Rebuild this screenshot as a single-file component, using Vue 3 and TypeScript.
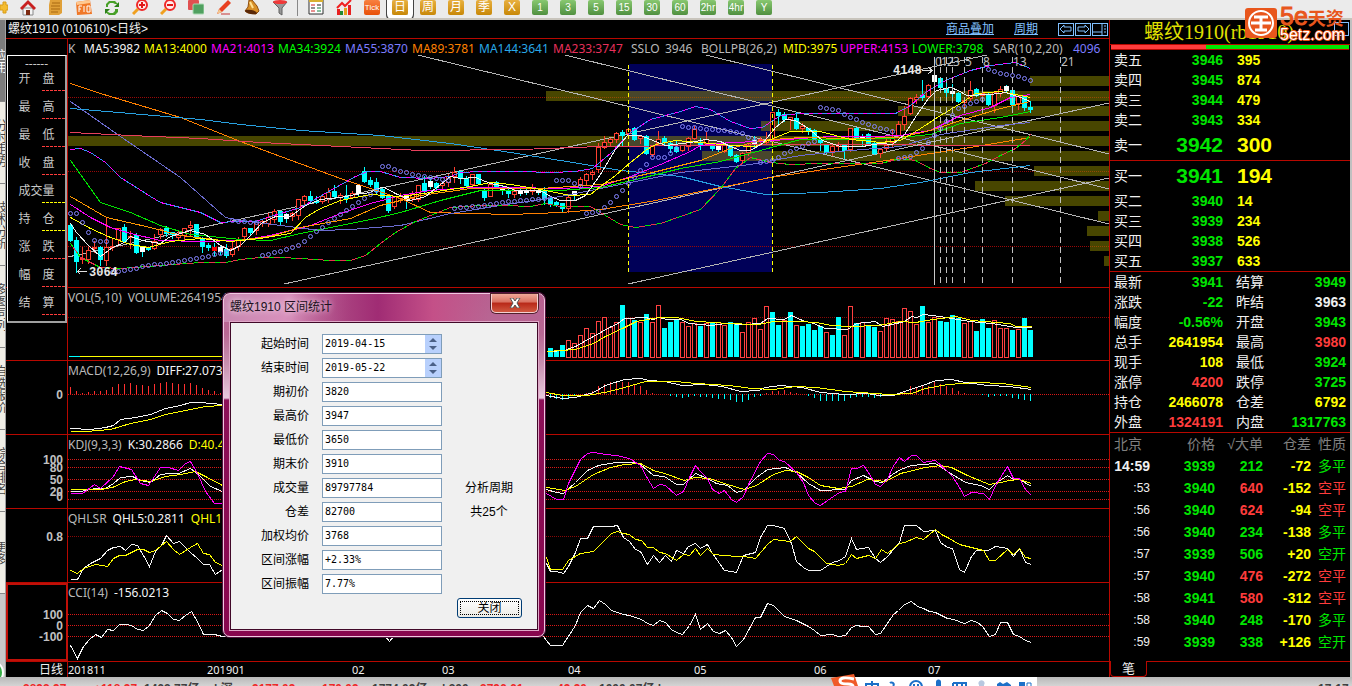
<script setup lang="ts">
interface Candle { x: number; kind: string; high: number; top: number; bottom: number; low: number }
interface Line { color: string; points: string; dash?: string }
interface Panel { name: string; x: number; y: number; h: number; grid: number[]; lines: Line[]; ticks: { y: number; text: string }[]; legend: { text: string; color: string }[] }

const STEP = 6
const FIRST_X = 70

const rawCandles = `c222 225 240 241,c236 240 261 272,r246 258 259 263,r246 250 259 263,r240 247 248 252,c245 247 259 265,r217 247 260 265,r238 246 247 250,r228 228 239 245,c223 227 241 242,r230 236 237 248,c232 235 252 253,w246 247 251 256,c246 247 249 250,r233 241 248 249,r227 229 234 238,c225 228 233 236,c231 232 234 238,r230 235 237 239,r228 228 235 239,r220 225 227 236,c223 224 236 237,c236 238 246 252,c242 245 247 250,e242 247 250 255,w245 247 251 254,c243 249 255 257,r240 248 254 256,r236 240 246 250,r226 228 236 240,c227 228 232 234,r220 222 230 234,r218 221 223 226,r212 217 223 226,r208 211 219 222,c210 211 221 225,w212 214 218 222,r211 213 216 220,r198 199 215 219,r194 196 200 204,c190 196 200 202,c195 201 202 203,r194 196 201 203,r187 192 198 202,c184 191 196 198,r192 195 197 203,c184 196 198 202,r190 193 197 198,w183 185 193 195,c166 171 181 182,c176 180 184 186,c177 182 191 194,c186 189 197 198,c193 195 210 212,r195 196 206 208,r192 196 198 202,w194 196 200 208,r190 194 198 201,r184 185 199 201,c175 183 191 193,w178 181 186 188,c181 183 187 189,r180 183 185 190,r173 176 182 186,r166 172 176 182,c170 171 178 183,c175 178 185 186,r173 174 184 186,c173 174 183 184,c188 190 197 200,r182 184 196 196,c180 182 187 188,w184 188 190 194,c186 190 193 197,r188 191 194 197,w188 191 193 195,w187 190 192 194,r183 188 191 194,w187 190 192 194,c186 190 198 204,c195 198 203 206,c200 202 204 206,c202 203 208 211,r195 197 208 212,w190 191 194 200,r176 179 184 188,r172 174 180 184,r169 172 174 179,r142 147 169 172,r135 142 147 148,r137 139 142 146,r131 133 139 142,c129 132 135 145,r128 129 133 136,c126 128 139 140,r134 136 138 143,c134 136 153 154,r144 146 154 156,r130 139 143 145,c135 138 142 145,c141 143 148 152,c140 147 151 152,r145 145 150 151,r136 138 146 150,r125 129 138 139,c137 142 144 149,r131 139 143 145,c142 144 148 150,w143 145 149 151,r143 145 151 152,c144 146 155 156,c153 155 161 162,r151 153 160 163,r143 145 152 155,w135 140 143 147,r136 139 141 145,r131 140 142 144,r111 112 140 142,c108 112 115 125,c111 114 119 121,r116 117 119 129,c111 118 128 129,r122 126 128 132,c127 128 130 134,c128 130 138 139,c138 140 142 150,c144 145 152 153,r144 146 151 155,r141 144 146 150,c143 145 150 158,r127 128 149 151,c126 128 137 138,w133 136 140 145,c132 134 144 145,c140 143 153 154,r148 149 153 157,r138 145 148 150,r128 137 142 147,r120 124 135 136,r105 116 124 129,r96 98 113 114,r93 97 99 103,c79 95 97 100,r83 85 96 98,w68 75 81 88,c76 78 87 90,c80 88 92 96,w83 91 93 97,c91 93 101 102,r96 100 102 106,r80 90 98 100,c87 89 95 96,r89 93 95 98,c91 94 104 105,r91 92 105 112,r85 89 93 96,w84 86 90 92,c87 90 104 107,r95 96 103 109,c95 96 107 110,c100 107 109 112`

const candles: Candle[] = rawCandles.split(',').map((s, i) => {
  const [high, top, bottom, low] = s.slice(1).split(' ').map(Number)
  return { x: FIRST_X + i * STEP, kind: s[0], high, top, bottom, low }
})

const sarSegments: number[][] = [
  [70, 213, 76, 213, 82, 222, 88, 232, 94, 240, 106, 241], [112, 272, 150, 265, 190, 259, 226, 252],
  [232, 220, 256, 222], [262, 255, 280, 251, 300, 244, 320, 228, 350, 207, 376, 190],
  [382, 166, 388, 166, 400, 171, 418, 175, 448, 180], [454, 208, 476, 206, 500, 202, 550, 198],
  [556, 180, 568, 180, 580, 186], [586, 213, 598, 211, 610, 202, 622, 190, 640, 170, 652, 157, 664, 157, 676, 148],
  [682, 126, 700, 128, 730, 131, 742, 133, 754, 140], [760, 162, 772, 160, 784, 153, 796, 148, 814, 141],
  [820, 107, 838, 110, 850, 117, 868, 124, 892, 131],
  [898, 158, 910, 156, 922, 148, 934, 135, 946, 121, 958, 108, 970, 103, 982, 99], [988, 69, 1000, 73, 1018, 76, 1030, 80],
]
const sarDots = sarSegments.flatMap((seg) => {
  const dots: { x: number; y: number }[] = []
  for (let x = seg[0]; x <= seg[seg.length - 2]; x += STEP) {
    let i = 0
    while (i < seg.length - 4 && seg[i + 2] < x) i += 2
    const t = (x - seg[i]) / (seg[i + 2] - seg[i])
    dots.push({ x, y: Math.round(seg[i + 1] + t * (seg[i + 3] - seg[i + 1])) })
  }
  return dots
})

const profile: number[][] = [[1030, 76], [546, 91], [898, 106], [761, 121], [68, 136], [702, 151], [1034, 166], [975, 181], [1005, 196], [1098, 211], [1087, 226], [1090, 241], [1104, 256]]
const trends = ['418,55 1109,224', '565,55 1109,189', '706,55 1109,154', '68,257 987,55', '284,284 1109,103', '628,284 1109,178']
const fib: { x: number; t: string }[] = [{ x: 940, t: '1' }, { x: 946, t: '2' }, { x: 952, t: '3' }, { x: 964, t: '5' }, { x: 982, t: '8' }, { x: 1012, t: '13' }, { x: 1060, t: '21' }]

const upperBand = '70,149 80,148 90,152 105,162 120,177 150,196 160,202 200,212 220,222 235,221 255,221 270,216 300,207 330,190 355,176 367,171 380,171 400,177 430,178 450,176 460,172 480,171 520,171 550,172 575,171 592,168 610,153 630,132 650,119 680,111 695,106 710,109 730,121 750,128 762,127 780,115 800,113 860,113 895,113 910,105 925,92 945,80 970,70 990,65 1015,62 1030,68'
const lowerBand = '70,243 80,257 100,267 120,268 160,265 200,262 225,262 240,259 260,257 280,257 300,258 330,260 350,260 365,255 380,243 395,232 415,221 450,207 480,205 505,205 530,206 545,203 560,206 590,206 605,215 620,224 635,227 660,223 700,209 720,188 735,168 750,157 770,162 790,164 820,163 860,163 880,163 900,158 915,160 930,168 940,172 960,172 985,163 1000,155 1015,148 1025,140 1030,134'

const mainLines: Line[] = [
  { color: '#ff8000', points: '70,83 100,93 130,102 180,117 240,141 280,156 340,178 400,198 430,212 470,213 510,214 560,212 600,209 650,201 700,191 770,177 830,168 900,158 930,153 970,147 1030,137' },
  { color: '#6c6cd0', points: '70,101 120,136 180,177 225,217 240,220 280,225 320,230 350,229 400,225 450,213 500,205 560,196 620,184 680,172 750,164 800,155 850,150 900,146 940,134 1000,125 1030,122' },
  { color: '#28a0e0', points: '70,108 130,113 200,119 240,124 300,130 380,135 450,143 510,152 560,160 620,170 680,176 720,186 765,194 820,192 880,188 920,182 970,172 1030,165' },
  { color: '#e8405c', points: '70,132 130,135 200,138 260,142 340,146 420,150 520,149 600,146 700,145 800,144 1030,145' },
  { color: '#3c8cff', points: upperBand },
  { color: '#ff00ff', points: upperBand, dash: '4 5' },
  { color: '#e8304c', points: lowerBand },
  { color: '#00e600', points: lowerBand, dash: '5 6' },
  { color: '#00e600', points: '70,160 100,202 130,212 160,225 190,234 240,239 270,240 300,233 340,225 370,219 400,212 440,200 480,190 510,190 560,190 600,187 640,178 680,168 720,161 760,150 800,139 850,139 890,138 930,134 960,123 1000,117 1030,111' },
  { color: '#ff00ff', points: '70,204 90,217 110,227 130,233 160,240 200,241 240,240 270,235 310,225 340,213 370,203 400,195 430,190 470,187 510,187 560,188 600,186 630,176 660,164 690,151 700,145 730,142 760,141 800,138 830,136 870,136 900,135 930,130 960,115 990,107 1010,97 1030,94' },
  { color: '#ff9800', points: '70,196 106,217 150,227 180,235 230,241 270,236 300,227 350,218 380,205 420,195 470,188 540,188 600,184 640,175 700,160 730,148 760,140 800,137 850,138 900,137 930,130 960,120 1000,108 1030,101' },
  { color: '#ffff00', points: '70,217 90,228 110,237 130,244 148,247 170,241 200,238 230,241 260,238 290,233 305,217 320,208 340,200 370,194 400,196 430,192 470,186 490,182 510,184 540,189 570,195 590,194 600,186 615,175 630,162 645,150 655,144 675,140 700,142 730,145 755,146 770,139 790,131 820,131 850,139 880,142 900,140 920,128 940,115 960,103 975,93 1000,91 1030,97' },
  { color: '#f0f0f0', points: '70,223 76,232 88,245 100,256 112,247 124,242 130,236 142,240 160,243 170,236 190,230 205,234 220,245 230,250 240,245 250,235 262,222 275,216 290,216 305,205 320,199 340,197 355,194 370,192 376,188 384,187 395,193 410,200 425,196 440,184 450,176 460,178 475,177 490,183 505,186 515,190 540,190 550,196 560,200 575,200 585,195 600,174 615,149 627,135 640,135 655,141 665,145 690,142 705,139 720,141 730,146 740,150 750,150 762,143 775,127 785,119 795,120 808,128 822,140 840,146 862,146 880,143 892,144 904,134 916,115 928,98 936,90 950,87 958,90 966,95 990,94 1005,92 1020,97 1030,101' },
]

const volume = 'c9,c6,c12,r17,r14,r22,r29,r24,r36,r40,r30,r35,c52,r39,c37,r35,c43,r35,r52,c29,c35,c37,r35,r31,r34,c31,r34,c35,r35,r32,c35,c33,r25,r35,r39,r28,r51,c45,c32,r37,c45,r32,c31,c33,c27,c31,r25,c22,c40,r22,r51,c34,r35,c31,c30,r26,r39,r38,r36,r49,r46,r33,c51,r35,r40,c36,c35,c42,c39,r34,r36,c26,c38,c29,r37,r29,r29,c27,r28,c39,c27'
  .split(',').map((s, i) => ({ up: s[0] === 'r', h: Number(s.slice(1)), x: 550 + i * STEP }))

const histLeft = [7, 3, 1, 2, 3, 3, 4, 7, 10, 10, 11, 9, 9, 8, 10, 11, 12, 11, 10, 10, 11, 9, 6, 4, 3, 1]
const histRight = [-4, -5, -6, -4, -1, 0, 1, 3, 8, 10, 12, 12, 12, 12, 10, 8, 4, 1, 0, 0, -2, -3, -4, -3, -2, -3, -3, -4, -5, -5, -6, -8, -8, -6, -3, -2, 1, 3, 3, 4, 2, 1, 0, -2, -4, -7, -7, -7, -7, -7, -4, -3, -3, -3, -4, -3, -2, 0, 0, 3, 8, 7, 8, 8, 13, 10, 8, 6, 3, 1, 0, 0, -1, -3, -2, -2, -2, -4, -5, -6, -7]
const hist = [...histLeft.map((v, i) => ({ x: 70 + i * STEP, v })), ...histRight.map((v, i) => ({ x: 550 + i * STEP, v }))].filter((b) => b.v !== 0)

const W = '#f4f4f4'
const Y = '#ffff00'
const G = '#b8b8b8'
const panels: Panel[] = [
  { name: 'vol', x: 68, y: 288, h: 72, grid: [317], ticks: [],
    legend: [{ text: 'VOL(5,10)', color: G }, { text: 'VOLUME:2641954', color: G }],
    lines: [
      { color: Y, points: '68,356 222,356' }, { color: '#00ffff', points: '68,356 79,356' },
      { color: W, points: '550,351 564,350 575,346 593,336 611,326 616,324 624,318 645,317 653,319 658,317 667,319 680,319 689,323 711,325 725,323 744,324 760,323 767,318 784,319 791,315 802,320 813,323 825,328 847,329 856,323 875,321 882,326 896,323 904,321 911,316 916,317 923,314 940,316 951,318 969,321 991,323 1016,327 1031,327' },
      { color: Y, points: '547,351 575,349 593,343 605,336 624,327 636,321 658,317 676,317 696,321 715,322 725,323 758,324 773,321 798,321 816,322 831,325 849,326 878,325 900,321 915,322 933,319 956,316 971,320 1009,323 1016,326 1031,326' },
    ] },
  { name: 'macd', x: 68, y: 361, h: 73, grid: [394], ticks: [{ y: 394, text: '0' }],
    legend: [{ text: 'MACD(12,26,9)', color: G }, { text: 'DIFF:27.0737', color: W }],
    lines: [
      { color: W, points: '70,428 90,429 105,427 113,425 120,419 135,417 150,414 165,408 180,405 190,402 200,402 222,404' },
      { color: Y, points: '70,431 85,431 110,429 130,423 150,419 165,414 190,409 205,406 222,405' },
      { color: W, points: '546,395 562,398 575,397 593,392 605,385 624,379 640,378 649,380 664,381 682,385 704,384 722,386 740,391 758,390 765,387 780,385 802,387 820,392 844,394 867,393 878,395 893,395 904,391 922,385 936,380 951,379 965,382 987,385 1009,386 1031,389' },
      { color: Y, points: '546,392 562,395 587,395 609,391 624,387 645,381 675,381 696,383 729,385 751,388 773,389 795,386 816,387 845,391 889,394 911,393 925,388 947,384 976,382 1002,383 1031,387' },
    ] },
  { name: 'kdj', x: 68, y: 435, h: 73, grid: [459, 467, 479, 491, 499],
    ticks: [{ y: 459, text: '100' }, { y: 467, text: '80' }, { y: 479, text: '50' }, { y: 491, text: '20' }, { y: 496, text: '0' }],
    legend: [{ text: 'KDJ(9,3,3)', color: G }, { text: 'K:30.2866', color: W }, { text: 'D:40.41', color: Y }],
    lines: [
      { color: W, points: '70,491 80,491 95,488 105,488 113,483 120,477 132,476 140,480 150,482 160,474 170,473 178,473 190,468 200,476 210,486 222,491' },
      { color: Y, points: '70,489 100,489 112,487 125,481 135,479 150,481 165,476 180,474 195,471 205,476 222,485' },
      { color: '#ff00ff', points: '70,493 82,493 94,484 100,488 113,476 119,466 131,469 140,483 148,485 160,467 168,467 178,470 185,463 190,461 197,473 205,491 214,503 222,503' },
      { color: W, points: '546,489 556,492 563,493 575,482 587,470 598,465 616,462 632,462 640,464 653,475 664,476 676,484 683,484 695,473 707,478 716,483 727,485 736,492 743,490 756,477 767,469 785,467 796,472 808,483 820,490 844,489 851,480 863,475 875,481 882,482 892,474 900,469 911,465 935,463 947,471 965,482 980,485 989,489 995,483 1007,475 1013,479 1019,479 1031,486' },
      { color: Y, points: '546,487 564,490 575,486 593,474 610,467 624,464 640,463 653,470 664,473 684,480 694,477 709,478 727,484 744,489 756,485 773,474 785,470 796,471 808,477 820,485 838,488 851,486 867,479 885,481 900,473 925,467 940,465 951,467 967,475 989,484 1000,482 1009,480 1019,479 1031,483' },
      { color: '#ff00ff', points: '546,493 556,499 563,499 568,483 580,459 587,453 593,452 605,454 616,455 629,458 640,465 647,478 653,488 659,484 665,485 676,495 683,491 689,477 695,465 700,471 707,478 712,489 719,493 724,490 731,499 736,502 743,496 748,484 760,461 767,453 773,454 779,460 784,461 796,472 803,482 808,495 815,503 820,505 827,500 839,492 845,491 851,468 856,468 863,465 868,472 875,484 880,486 887,479 892,467 899,457 904,461 911,455 916,455 923,462 935,460 947,471 952,476 959,487 964,496 971,492 983,493 989,499 995,485 1007,466 1013,478 1019,478 1025,489 1031,495' },
    ] },
  { name: 'qhlsr', x: 68, y: 509, h: 73, grid: [536], ticks: [{ y: 536, text: '0.8' }],
    legend: [{ text: 'QHLSR', color: G }, { text: 'QHL5:0.2811', color: W }, { text: 'QHL10:0.35', color: Y }],
    lines: [
      { color: W, points: '70,579 77,579 83,568 90,563 100,558 107,550 113,547 120,546 125,550 131,544 137,545 143,555 149,566 155,551 161,545 166,535 173,543 179,541 190,552 197,558 203,564 209,564 215,574 222,569' },
      { color: Y, points: '70,570 77,573 83,568 95,564 107,566 113,558 119,555 125,555 137,549 143,549 149,552 155,550 166,541 173,549 179,554 190,547 197,543 203,553 209,554 215,562 222,565' },
      { color: W, points: '546,563 550,571 556,571 563,573 568,566 575,552 580,538 587,538 593,526 611,526 617,525 623,537 629,541 635,549 640,551 647,564 653,555 659,562 665,555 671,561 676,550 683,553 688,546 695,543 700,548 707,544 712,553 724,570 731,571 736,572 743,555 755,552 760,537 767,525 773,525 784,528 791,543 796,561 803,567 808,570 820,570 832,562 839,560 845,556 851,538 856,549 868,547 875,558 880,562 887,556 899,542 904,525 916,525 923,531 935,530 940,542 947,547 952,548 959,569 964,572 971,556 976,550 988,550 995,546 1007,548 1013,556 1019,548 1025,562 1031,564' },
      { color: Y, points: '546,557 550,569 562,569 568,560 580,553 593,551 605,539 611,533 617,531 623,533 629,534 635,539 641,540 647,547 653,547 659,552 665,553 676,560 683,554 689,555 695,548 700,555 707,548 713,554 724,555 736,556 743,556 755,558 767,544 773,539 790,541 796,536 808,548 814,551 826,563 838,565 845,563 851,554 856,558 868,555 875,558 881,549 887,553 899,543 904,542 916,537 923,539 935,529 941,534 947,537 959,544 971,547 983,550 989,560 995,560 1007,549 1013,554 1019,548 1025,557 1031,558' },
    ] },
  { name: 'cci', x: 68, y: 583, h: 78, grid: [614, 625, 636],
    ticks: [{ y: 614, text: '100' }, { y: 625, text: '0' }, { y: 636, text: '-100' }],
    legend: [{ text: 'CCI(14)', color: G }, { text: '-156.0213', color: W }],
    lines: [
      { color: W, points: '70,645 77,658 83,646 89,639 95,634 101,637 107,629 113,630 119,624 125,624 131,625 137,629 143,630 149,625 155,615 161,610 167,613 173,619 179,620 185,615 191,611 197,621 203,634 214,634 222,636 300,634 385,636 389,641 393,636 540,632 546,640 550,645 562,645 575,625 580,612 587,605 593,608 599,600 605,604 611,610 623,614 629,615 635,617 641,619 647,623 653,625 659,620 665,622 671,629 676,632 682,634 689,625 695,614 700,629 707,623 713,631 719,633 725,630 731,637 736,646 743,639 749,628 755,617 760,617 767,603 773,605 784,616 796,620 808,626 814,630 820,635 832,634 838,636 845,635 851,627 856,625 862,626 868,626 875,634 880,633 893,614 898,610 904,604 911,601 917,606 923,608 929,611 935,612 947,618 953,619 964,623 971,620 977,622 982,626 989,636 995,634 1000,622 1007,622 1013,634 1019,636 1025,640 1031,642' },
    ] },
]

const legend = [
  ['K', G], ['MA5:3982', W], ['MA13:4000', Y], ['MA21:4013', '#ff00ff'], ['MA34:3924', '#00ff00'], ['MA55:3870', '#7c7cff'], ['MA89:3781', '#ff8000'],
  ['MA144:3641', '#28a8e8'], ['MA233:3747', '#e8305c'], ['SSLO', G], ['3946', G], ['BOLLPB(26,2)', G], ['MID:3975', Y], ['UPPER:4153', '#ff00ff'],
  ['LOWER:3798', '#00ff00'], ['SAR(10,2,20)', G], ['4096', '#7c7cff'],
]
const info = [['开　盘', 'red'], ['最　高', 'red'], ['最　低', 'red'], ['收　盘', 'red'], ['成交量', 'yellow'], ['持　仓', 'yellow'], ['涨　跌', 'red'], ['幅　度', 'red'], ['结　算', 'red']]
const months = ['201811', '201901', '02', '03', '04', '05', '06', '07']
const asks = [['卖五', '3946', '395'], ['卖四', '3945', '874'], ['卖三', '3944', '479'], ['卖二', '3943', '334'], ['卖一', '3942', '300']]
const bids = [['买一', '3941', '194'], ['买二', '3940', '14'], ['买三', '3939', '234'], ['买四', '3938', '526'], ['买五', '3937', '633']]
const stats = [
  ['最新', '3941', 'g', '结算', '3949', 'g'], ['涨跌', '-22', 'g', '昨结', '3963', 'w'], ['幅度', '-0.56%', 'g', '开盘', '3943', 'g'],
  ['总手', '2641954', 'y', '最高', '3980', 'r'], ['现手', '108', 'y', '最低', '3924', 'g'], ['涨停', '4200', 'r', '跌停', '3725', 'g'],
  ['持仓', '2466078', 'y', '仓差', '6792', 'y'], ['外盘', '1324191', 'r', '内盘', '1317763', 'g'],
]
const trades = [
  ['14:59', '3939', '212', 'g', '-72', '多平'], [':53', '3940', '640', 'r', '-152', '空平'], [':56', '3940', '624', 'r', '-94', '空平'],
  [':56', '3940', '234', 'g', '-138', '多平'], [':57', '3939', '506', 'g', '+20', '空开'], [':57', '3940', '476', 'r', '-272', '空平'],
  [':58', '3941', '580', 'r', '-312', '空平'], [':58', '3940', '248', 'g', '-170', '多平'], [':59', '3939', '338', 'g', '+126', '空开'],
]
const periods = ['周', '月', '季', 'X']
const minutes = ['1', '3', '5', '15', '30', '60', '2hr', '4hr', 'Y']
const fields = [
  { id: 'start', label: '起始时间', value: '2019-04-15', spin: true }, { id: 'end', label: '结束时间', value: '2019-05-22', spin: true },
  { id: 'open', label: '期初价', value: '3820' }, { id: 'high', label: '最高价', value: '3947' }, { id: 'low', label: '最低价', value: '3650' },
  { id: 'close', label: '期末价', value: '3910' }, { id: 'volume', label: '成交量', value: '89797784', note: '分析周期' },
  { id: 'interest', label: '仓差', value: '82700', note: '共25个' }, { id: 'avg', label: '加权均价', value: '3768' },
  { id: 'change', label: '区间涨幅', value: '+2.33%' }, { id: 'range', label: '区间振幅', value: '7.77%' },
]
const sideTabs = ['应用', '分时走势', '技术分析', '多图同列', '自选报价', '综合排名', '更多']
</script>

<template>
  <div class="app">
    <header class="toolbar">
      <button class="tool" aria-label="后退"><svg viewBox="0 0 16 16"><path d="M8 5h3V2h3v3h2v5h-2v3h-3v-3H8z" fill="#f4bc30" stroke="#d89c18" /></svg></button>
      <button class="tool" aria-label="主页"><svg viewBox="0 0 16 16"><path d="M3 8h10v7H3z" fill="#f4f4f4" stroke="#888" /><path d="M0 8 8 0l8 8-2 2-6-6-6 6z" fill="#c82020" /><path d="M6 10h4v5H6z" fill="#7c2a10" /></svg></button>
      <button class="tool" aria-label="公告"><svg viewBox="0 0 16 16"><path d="M2 0h12v13l-3 2H1V5z" fill="#e0a038" /><path d="M4 3h8M3 6h9M3 9h9M3 12h7" stroke="#a86810" /></svg></button>
      <button class="tool" aria-label="F10"><svg viewBox="0 0 16 16"><path d="M0 2 14 0l2 14-15 1z" fill="#f07828" /><path d="M0 2 14 0v3L1 5z" fill="#ffc890" /><path d="M3 12V6h3M3 9h2M8 6v6M11 6h3v6h-3z" stroke="#fff" fill="none" /></svg></button>
      <button class="tool" aria-label="刷新"><svg viewBox="0 0 16 16"><path d="M2 7V4l3-3h6l3 3h-3L9 3H6L4 5v2z" fill="#48a028" /><path d="M14 9v3l-3 3H5l-4-3h3l2 1h3l2-2v-2z" fill="#48a028" /><path d="M15 2v5h-5zM1 14V9h5z" fill="#2c8018" /></svg></button>
      <button class="tool" aria-label="放大"><svg viewBox="0 0 16 16"><circle cx="10" cy="5" r="5" fill="#ffecec" stroke="#f02828" stroke-width="2" /><path d="M6 9l-5 5" stroke="#f0a020" stroke-width="3" /><path d="M7 5h6M10 2v6" stroke="#e01818" stroke-width="2" /></svg></button>
      <button class="tool" aria-label="缩小"><svg viewBox="0 0 16 16"><circle cx="10" cy="5" r="5" fill="#ffecec" stroke="#f02828" stroke-width="2" /><path d="M6 9l-5 5" stroke="#f0a020" stroke-width="3" /><path d="M7 5h6" stroke="#e01818" stroke-width="2" /></svg></button>
      <button class="tool" aria-label="叠加"><svg viewBox="0 0 16 16"><rect x="0" y="0" width="11" height="10" rx="1" fill="#e05050" /><rect x="5" y="4" width="11" height="10" rx="1" fill="#50a060" stroke="#a8d8b0" /></svg></button>
      <button class="tool" aria-label="画线"><svg viewBox="0 0 16 16"><path d="M1 14 3 9 12 0l3 3-9 9z" fill="#e84020" /><path d="M1 14 3 9l3 3z" fill="#f4c890" /><path d="M5 14h9" stroke="#d89090" stroke-width="2" /></svg></button>
      <button class="tool" aria-label="预警"><svg viewBox="0 0 16 16"><path d="M5 0h3l5 6 2 5-3 3-8-1-3-2 3-4z" fill="#d89028" stroke="#905010" /><ellipse cx="7" cy="12" rx="6" ry="2" fill="#5a2808" transform="rotate(12 7 12)" /><path d="M6 2 9 8" stroke="#ffe090" stroke-width="2" /></svg></button>
      <button class="tool" aria-label="选股"><svg viewBox="0 0 16 16"><path d="M1 2h14l-5 6v7l-3-2V8z" fill="#989898" stroke="#606060" /><ellipse cx="8" cy="2" rx="7" ry="2" fill="#f03838" /></svg></button>
      <span class="divider"></span>
      <button class="tool" aria-label="报价"><svg viewBox="0 0 16 16"><path d="M1 0h14v14H1z" fill="#fff" stroke="#303030" /><path d="M1 1h14" stroke="#d8b030" stroke-width="2" /><path d="M3 5h4M3 11h4" stroke="#d02020" /><path d="M9 5h4M3 8h4" stroke="#202020" /><path d="M9 8h4M9 11h4" stroke="#108040" /></svg></button>
      <button class="tool" aria-label="走势"><svg viewBox="0 0 16 16"><path d="M1 9h3v6H1zM12 5h3v10h-3z" fill="#e82020" /><path d="M4 11h3v4H4z" fill="#208830" /><path d="M8 8h3v7H8z" fill="#e8a020" /><path d="M1 8 6 3l3 3 6-6" stroke="#f02020" stroke-width="2" fill="none" /></svg></button>
      <button class="tool period tick">Tick</button>
      <button class="tool period picked">日</button>
      <button v-for="p in periods" :key="p" class="tool period">{{ p }}</button>
      <button v-for="m in minutes" :key="m" class="tool period minute">{{ m }}</button>
    </header>

    <div class="workspace">
      <nav class="side" aria-label="页面">
        <button v-for="(t, i) in sideTabs" :key="t" :class="['side-tab', { active: i === 0 }]">{{ t }}</button>
        <span class="orb"></span>
      </nav>

      <main class="chart">
        <div class="chart-head">
          <h1>螺纹1910 (010610)&lt;日线&gt;</h1>
          <a href="#overlay">商品叠加</a>
          <a href="#period">周期</a>
          <span class="nav-icons">
            <button aria-label="左移"><svg viewBox="0 0 14 11"><path d="M1 5l4-4v2h7v4H5v2z" /></svg></button>
            <button aria-label="右移"><svg viewBox="0 0 14 11"><path d="M13 5l-4-4v2H2v4h7v2z" /></svg></button>
            <button aria-label="布局"><svg viewBox="0 0 14 11"><path d="M9 0v11M0 8h9M11 2h2M11 5h2M11 8h2" /></svg></button>
          </span>
        </div>

        <section class="row main-row">
          <div class="axis"></div>
          <div class="plot">
            <svg class="canvas" viewBox="68 39 1041 248" preserveAspectRatio="xMinYMin meet" shape-rendering="crispEdges">
              <rect x="629" y="64" width="143" height="208" fill="#000058" />
              <path d="M68 97.500H1109M68 171.500H1109M68 246.500H1109" stroke="#980808" stroke-dasharray="1 1" />
              <rect v-for="b in profile" :key="b[1]" :x="b[0]" :y="b[1]" :width="1109 - b[0]" height="10" fill="#908c00" fill-opacity="0.5" />
              <polyline v-for="t in trends" :key="t" :points="t" fill="none" stroke="#b4b4b4" />
              <g transform="translate(0.5 0.5)">
                <g v-for="c in candles" :key="c.x">
                  <template v-if="c.kind === 'r'">
                    <path :d="`M${c.x} ${c.high}V${c.top}M${c.x} ${c.bottom}V${c.low}`" stroke="#ff4030" />
                    <rect :x="c.x - 2" :y="c.top" width="4" :height="Math.max(1, c.bottom - c.top)" fill="#000" stroke="#ff4030" />
                  </template>
                  <template v-else>
                    <path :d="`M${c.x} ${c.high}V${c.low}`" stroke="#00ffff" />
                    <rect :x="c.x - 2" :y="c.top" width="4" :height="Math.max(1, c.bottom - c.top)" :fill="c.kind === 'w' ? '#fff' : c.kind === 'e' ? '#f00' : '#00ffff'" :stroke="c.kind === 'w' ? '#fff' : c.kind === 'e' ? '#f00' : '#00ffff'" />
                  </template>
                </g>
                <polyline v-for="(l, i) in mainLines" :key="i" :points="l.points" fill="none" :stroke="l.color" :stroke-dasharray="l.dash" />
                <circle v-for="d in sarDots" :key="d.x" :cx="d.x" :cy="d.y" r="2" fill="none" stroke="#8484ff" shape-rendering="auto" />
                <path d="M628 64V272M772 64V272" stroke="#ffff00" stroke-dasharray="4 3" />
                <path d="M934 56V284" stroke="#c8c8c8" />
                <path v-for="f in fib" :key="f.x" :d="`M${f.x} 56V284`" stroke="#c0c0c0" stroke-dasharray="6 4" />
                <path d="M77 271H86M80 268l-3 3 3 3M921 70H932M928 67l4 3-4 3" stroke="#e0e0e0" fill="none" />
              </g>
              <text v-for="f in fib" :key="f.t" :x="f.x + 1" y="66" class="fib">{{ f.t }}</text>
              <text x="935" y="66" class="fib">0</text>
              <text x="893" y="74" class="mark">4148</text>
              <text x="89" y="276" class="mark">3064</text>
            </svg>
            <div class="legend wide"><span v-for="l in legend" :key="l[0]" :style="{ color: l[1] }">{{ l[0] }}</span></div>
          </div>
        </section>

        <section v-for="p in panels" :key="p.name" :class="['row', p.name]">
          <div class="axis">
            <svg class="canvas" :viewBox="`6 ${p.y} 61 ${p.h}`" preserveAspectRatio="xMinYMin meet">
              <text v-for="t in p.ticks" :key="t.text" x="63" :y="t.y + 5" class="tick-label">{{ t.text }}</text>
            </svg>
          </div>
          <div class="plot">
            <svg class="canvas" :viewBox="`68 ${p.y} 1041 ${p.h}`" preserveAspectRatio="xMinYMin meet" shape-rendering="crispEdges">
              <path v-for="g in p.grid" :key="g" :d="`M68 ${g + 0.5}H1109`" :stroke="p.name === 'vol' || p.name === 'qhlsr' ? '#880808' : '#d81818'" stroke-dasharray="1 1" />
              <template v-if="p.name === 'vol'">
                <template v-for="b in volume" :key="b.x">
                  <rect v-if="b.up" :x="b.x - 1.5" :y="357 - b.h" width="4" :height="b.h" fill="#000" stroke="#ff4040" />
                  <rect v-else :x="b.x - 2" :y="357 - b.h" width="5" :height="b.h" fill="#00ffff" />
                </template>
              </template>
              <template v-if="p.name === 'macd'">
                <path v-for="b in hist" :key="b.x" :d="`M${b.x + 0.5} 394V${394 - b.v}`" :stroke="b.v > 0 ? '#ff3030' : '#00ffff'" />
              </template>
              <g transform="translate(0.5 0.5)">
                <polyline v-for="(l, i) in p.lines" :key="i" :points="l.points" fill="none" :stroke="l.color" />
              </g>
            </svg>
            <div class="legend"><span v-for="l in p.legend" :key="l.text" :style="{ color: l.color }">{{ l.text }}</span></div>
          </div>
        </section>

        <div class="row dates">
          <div class="axis">日线</div>
          <div class="months"><span v-for="m in months" :key="m">{{ m }}</span></div>
        </div>

        <div class="info">
          <p class="rule">------</p>
          <p v-for="i in info" :key="i[0]"><span>{{ i[0] }}</span><i :class="['mark-line', i[1]]"></i></p>
        </div>
      </main>

      <aside class="quote">
        <h2>螺纹1910(rb1910)</h2>
        <button class="panel-icon" aria-label="面板"></button>
        <div class="ratio"><span></span></div>
        <dl class="book">
          <div v-for="r in asks" :key="r[0]" :class="{ best: r[0] === '卖一' }"><dt>{{ r[0] }}</dt><dd class="g">{{ r[1] }}</dd><dd class="y">{{ r[2] }}</dd></div>
        </dl>
        <dl class="book">
          <div v-for="r in bids" :key="r[0]" :class="{ best: r[0] === '买一' }"><dt>{{ r[0] }}</dt><dd class="g">{{ r[1] }}</dd><dd class="y">{{ r[2] }}</dd></div>
        </dl>
        <dl class="stats">
          <div v-for="s in stats" :key="s[0]"><dt>{{ s[0] }}</dt><dd :class="s[2]">{{ s[1] }}</dd><dt>{{ s[3] }}</dt><dd :class="s[5]">{{ s[4] }}</dd></div>
        </dl>
        <table class="trades">
          <thead><tr><th class="left">北京</th><th>价格</th><th>√大单</th><th>仓差</th><th>性质</th></tr></thead>
          <tbody>
            <tr v-for="(t, i) in trades" :key="i">
              <td :class="['time', { full: i === 0 }]">{{ t[0] }}</td><td class="g">{{ t[1] }}</td><td :class="t[3]">{{ t[2] }}</td><td class="y">{{ t[4] }}</td><td :class="['kind', t[3]]">{{ t[5] }}</td>
            </tr>
          </tbody>
        </table>
        <div class="quote-tabs"><button>笔</button><span></span></div>
      </aside>
    </div>

    <footer class="status">
      <span class="up">2892.97</span><span class="up">+118.97</span><span>1463.77亿</span><span>| 深</span>
      <span class="up">9177.09</span><span class="up">170.09</span><span>1774.09亿</span><span>| 300</span>
      <span class="up">3796.61</span><span class="up">49.90</span><span>1000.07亿 |</span><span>17:17</span>
    </footer>

    <div class="ime" aria-hidden="true">
      <svg viewBox="831 674 207 12">
        <path d="M837 677H1037V686H837z" fill="#fff" />
        <path d="M831 678 854 674l4 12h-24z" fill="#f05a28" />
        <path d="M854 679q-14-3-14 2 0 3 8 3 6 0 5 4" fill="none" stroke="#fff" stroke-width="3" />
        <g fill="none" stroke="#1c70c8" stroke-width="2">
          <path d="M866 684h12M866 683v4M878 683v4M872 681v6M890 683a2 2 0 0 1 3 3" />
          <circle cx="916" cy="687" r="6" /><path d="M914 684v2M918 684v2M953 683h13v4M953 687v-4M957 684v3M962 684v3" />
        </g>
        <path d="M936 687v-5a2 2 0 0 1 5 0v5zM997 687v-3l3-2 3 2 4-2 4 3v2zM1019 682h6v5h-6z" fill="#1c70c8" />
        <path d="M979 687v-2a3 3 0 1 1 5 0v2z" fill="#b8c8e0" />
        <path d="M1027 683h4v4h-4z" fill="none" stroke="#1c70c8" />
      </svg>
    </div>

    <div class="brand">
      <svg viewBox="0 0 32 30"><rect width="32" height="30" rx="3" fill="#e8561c" /><circle cx="16" cy="15" r="12" fill="none" stroke="#fff" stroke-width="2" /><path d="M9 9h14M6 15h20M16 9v13M10 22h12" fill="none" stroke="#fff" stroke-width="3" /></svg>
      <div><strong>5e<em>天资</em></strong><span>5etz.com</span></div>
    </div>

    <div class="dialog" role="dialog" aria-labelledby="dialog-title">
      <div class="dialog-title">
        <h3 id="dialog-title">螺纹1910 区间统计</h3>
        <button class="x" aria-label="关闭窗口"><svg viewBox="0 0 12 10"><path d="M1 0h3l2 3 2-3h3L8 5l3 5H8L6 7l-2 3H1l3-5z" fill="#fff" stroke="#555" /></svg></button>
      </div>
      <form class="dialog-body" @submit.prevent>
        <div v-for="f in fields" :key="f.id" class="field">
          <label :for="f.id">{{ f.label }}</label>
          <span class="box">
            <input :id="f.id" type="text" :value="f.value" readonly />
            <button v-if="f.spin" type="button" class="spin" aria-label="调整日期"><svg viewBox="0 0 16 18"><path d="M8 3l4 4H4zM8 15l4-4H4z" fill="#4a6088" /></svg></button>
          </span>
          <span v-if="f.note" class="note">{{ f.note }}</span>
        </div>
        <button type="button" class="ok">关闭</button>
      </form>
    </div>
  </div>
</template>

<style>
html, body { margin: 0; background: #000; overflow: hidden; }
</style>

<style scoped>
* { box-sizing: border-box; }
.app { position: relative; height: 100vh; min-height: 686px; display: flex; flex-direction: column; background: #000; color: #f0f0f0; font: 12px/16px "Noto Sans", "Noto Sans CJK SC", sans-serif; overflow: hidden; }
h1, h2, h3, p, dl, dd { margin: 0; font-weight: 400; }
button { font: inherit; color: inherit; background: none; border: 0; padding: 0; margin: 0; }
svg { display: block; }
.g { color: #00e600; } .y { color: #ffff00; } .r { color: #ff3c3c; } .w { color: #f0f0f0; }

.toolbar { flex: none; display: flex; height: 20px; background: #ebebeb; border-bottom: 2px solid #c8c4bc; overflow: hidden; gap: 12px; }
.tool { flex: none; width: 16px; height: 16px; }
.tool:first-child { margin-left: -8px; }
.tool svg { width: 16px; height: 16px; }
.divider { flex: none; width: 1px; height: 16px; background: #888; margin-left: -3px; margin-right: -2px; }
.period { border-radius: 2px; height: 15px; background: linear-gradient(#e8b040, #c88808); color: #fff; font: 12px/15px "Liberation Sans", "Noto Sans CJK SC", sans-serif; text-align: center; white-space: nowrap; }
.period.tick { background: linear-gradient(#f88040, #e85008); font-size: 8px; }
.period.picked { box-shadow: 0 0 0 5px #fff, 0 0 0 6px #444; }
.period.minute { background: linear-gradient(#88c870, #509040); font-size: 10px; }

.workspace { flex: none; display: flex; height: 657px; }
.side { position: relative; flex: none; width: 6px; overflow: hidden; background: #c8c8c8; border-right: 1px solid #a0a0a0; }
.side-tab { display: block; width: 6px; height: 82px; background: #f0eee6; color: #444; border-bottom: 1px solid #888; writing-mode: vertical-rl; overflow: hidden; font-size: 12px; line-height: 12px; text-align: center; }
.side-tab.active { background: #7c7c7c; color: #fff; }
.orb { position: absolute; left: -21px; bottom: -8px; width: 25px; height: 25px; border-radius: 50%; background: #38b048; border: 2px solid #fff; }

.chart { position: relative; flex: 1; min-width: 0; }
.chart-head { display: flex; align-items: center; height: 19px; border-bottom: 1px solid #b80800; padding: 0 1px 0 2px; gap: 20px; font-family: "Liberation Sans", "Noto Sans CJK SC", sans-serif; }
.chart-head h1 { flex: 1; font-size: 12px; line-height: 18px; }
.chart-head a { color: #80c0ff; line-height: 16px; }
.nav-icons { display: flex; gap: 1px; }
.nav-icons button { width: 16px; height: 13px; border: 1px solid #80c0ff; }
.nav-icons svg { width: 14px; height: 11px; fill: none; stroke: #80c0ff; }

.row { display: grid; grid-template-columns: 62px minmax(0, 1fr); height: 74px; border-bottom: 1px solid #b80800; overflow: hidden; }
.main-row { height: 249px; }
.vol { height: 73px; }
.cci { height: 79px; }
.axis { border-right: 1px solid #b80800; min-width: 0; }
.cci .axis { border: 2px solid #c01008; }
.cci .axis .canvas { margin: -2px; width: 61px; }
.plot { position: relative; min-width: 0; }
.canvas { width: 100%; height: 100%; }
.main-row .canvas { height: 248px; }
.vol .canvas { height: 72px; }
.macd .canvas, .kdj .canvas, .qhlsr .canvas { height: 73px; }
.cci .canvas { height: 78px; }
.legend { position: absolute; left: 0; top: 1px; display: flex; gap: 6px; line-height: 18px; white-space: nowrap; }
.legend.wide { display: grid; gap: 0; grid-template-columns: 16px 60px 67px 67px 67px 67px 67px 74px 78px 34px 36px 82px 57px 72px 81px 80px 36px; }
.tick-label { font: bold 12px "Liberation Sans", sans-serif; fill: #c0c0c0; text-anchor: end; }
.fib { font: 12px "Noto Sans", sans-serif; fill: #c0c0c0; }
.mark { font: bold 12px "Liberation Mono", monospace; fill: #e8e8e8; }
.row.dates { height: 15px; border: 0; line-height: 15px; }
.dates .axis { text-align: right; padding-right: 4px; font-size: 12px; }
.months { display: grid; grid-template-columns: 139px 145px 90px 126px 126px 120px 114px 1fr; font-size: 11px; }

.info { position: absolute; left: 1px; top: 35px; width: 60px; height: 268px; background: #000; border: 1px solid #fff; border-right: 2px solid #a0a0a0; border-bottom: 2px solid #a0a0a0; padding-top: 2px; color: #c8c8c8; text-align: center; }
.info p { height: 28px; padding-top: 1px; line-height: 14px; }
.info p.rule { height: 11px; padding-top: 0; line-height: 11px; }
.info p span { display: block; height: 20px; line-height: 18px; white-space: nowrap; }
.mark-line { display: block; width: 23px; height: 1px; margin-left: 34px; }
.mark-line.red { background: repeating-linear-gradient(90deg, #ff3c3c 0 3px, #000 3px 4px); }
.mark-line.yellow { background: repeating-linear-gradient(90deg, #ffff00 0 3px, #000 3px 4px); }

.quote { position: relative; flex: none; width: 243px; display: flex; flex-direction: column; border-left: 1px solid #b80800; border-right: 2px solid #c0c0c0; font-family: "Liberation Sans", "Noto Sans CJK SC", sans-serif; font-size: 14px; }
.quote h2 { height: 25px; border-bottom: 1px solid #b80800; font: 20px/24px "Liberation Serif", "Noto Sans CJK SC", serif; color: #e0e000; padding-left: 34px; white-space: nowrap; }
.panel-icon { position: absolute; right: 1px; top: 2px; width: 15px; height: 14px; border: 1px solid #80c0ff; }
.ratio { height: 5px; background: #00e600; border-bottom: 1px solid #b80800; margin: 0 1px; }
.ratio span { display: block; width: 40%; height: 4px; background: #ff3c3c; }
.book { border-bottom: 1px solid #b80800; }
.book div { display: grid; grid-template-columns: 48px 65px 1fr; height: 20px; line-height: 20px; padding-left: 4px; align-items: center; }
.book div.best { height: 30px; line-height: 30px; }
dd { font-weight: 700; }
dt { white-space: nowrap; }
.book dd { text-align: right; padding-right: 4px; }
.book dd + dd { text-align: left; padding-left: 10px; }
.book .best dd { font-size: 21px; }
.stats { border-bottom: 1px solid #b80800; }
.stats div { display: grid; grid-template-columns: 40px 69px 40px 1fr; height: 20px; line-height: 20px; padding: 0 4px; }
.stats dd { text-align: right; }
.stats dt:nth-of-type(2) { padding-left: 13px; }
.trades { width: 100%; border-collapse: collapse; table-layout: fixed; }
.trades th, .trades td { height: 22px; padding: 0; line-height: 22px; text-align: right; font-weight: 700; white-space: nowrap; }
.trades th { font-weight: 400; color: #808080; }
.trades th:nth-child(1) { width: 40px; } .trades th:nth-child(2) { width: 65px; } .trades th:nth-child(3) { width: 48px; } .trades th:nth-child(4) { width: 48px; }
.trades th:last-child, .trades td.kind { padding-right: 4px; font-weight: 400; }
.trades th.left { text-align: left; padding-left: 4px; }
.trades td.time { font-size: 12px; font-weight: 400; }
.trades td.time.full { font-size: 14px; font-weight: 700; }
.quote-tabs { display: flex; height: 16px; margin-top: auto; }
.quote-tabs button { width: 37px; border: 1px solid #b80800; border-top: 0; border-radius: 0 0 4px 4px; font-size: 13px; line-height: 14px; }
.quote-tabs span { flex: 1; border-top: 1px solid #b80800; }

.status { flex: 1; display: grid; grid-template-columns: 71px 50px 70px 38px 70px 50px 70px 38px 77px 42px 1fr 34px; padding: 5px 0 0 23px; background: linear-gradient(#b8b8b8, #d4d4d4); overflow: hidden; font: bold 12px/14px "Liberation Sans", "Noto Sans CJK SC", sans-serif; color: #404040; }
.status span { height: 14px; white-space: nowrap; }
.status .up { color: #f02828; }
.ime { position: absolute; right: 314px; bottom: 0; width: 207px; height: 12px; overflow: hidden; }

.brand { position: absolute; right: 2px; top: 8px; display: flex; gap: 3px; width: 105px; color: #e8561c; font-family: "Liberation Sans", "Noto Sans CJK SC", sans-serif; }
.brand svg { flex: none; width: 32px; height: 30px; }
.brand div { display: flex; flex-direction: column; }
.brand strong { font-size: 25px; line-height: 17px; font-weight: 400; white-space: nowrap; -webkit-text-stroke: 1px #e8561c; }
.brand em { font-style: normal; font-size: 18px; font-weight: 700; -webkit-text-stroke: 0; }
.brand span { font-size: 16px; line-height: 13px; color: #fff; text-shadow: 1px 0 #e8561c, -1px 0 #e8561c, 0 1px #e8561c, 0 -1px #e8561c; }

.dialog { position: absolute; left: 223px; top: 293px; width: 322px; padding: 0 6px 6px; border: 1px solid #f0c8e0; border-radius: 7px; box-shadow: 0 0 0 1px #50103c; background: linear-gradient(100deg, #c888b0 0, #d890bc 20%, transparent 40%) 0 0 / 100% 28px no-repeat, linear-gradient(#b86090 0, #b86894 40px, #c890b0 70px, #e8c8dc 104px, #8c1058 106px, #88064e 100%); color: #000; font: 12px/16px "Liberation Sans", "Noto Sans CJK SC", sans-serif; }
.dialog-title { display: flex; justify-content: space-between; height: 28px; background: linear-gradient(90deg, transparent 20%, #a02c74 48%, #c45088 66%, transparent 84%); }
.dialog-title h3 { font-size: 12px; line-height: 26px; color: #201020; text-shadow: 0 0 6px #fff; }
.x { width: 47px; height: 19px; display: grid; place-items: center; border: 1px solid #f4d0d0; border-top: 0; border-radius: 0 0 5px 5px; background: linear-gradient(#f0a898 0, #d87060 45%, #b82818 50%, #d05840 100%); box-shadow: 0 0 0 1px #50202c; }
.x svg { width: 12px; height: 10px; }
.dialog-body { display: flex; flex-direction: column; gap: 4px; background: #f0f0f0; border: 1px solid #400828; outline: 1px solid #e0a8c8; padding: 11px 15px 11px 10px; }
.field { display: grid; grid-template-columns: 68px 120px 1fr; column-gap: 13px; align-items: center; height: 20px; }
.field label { text-align: right; }
.box { display: flex; height: 20px; border: 1px solid #7f9db9; background: #fff; }
.box input { flex: 1; min-width: 0; border: 0; outline: 0; padding: 0 2px; background: #fff; color: #000; font: 10px/18px "DejaVu Sans Mono", monospace; }
.spin { width: 16px; height: 18px; background: #b8d0fc; }
.note { text-align: center; width: 68px; }
.ok { align-self: flex-end; width: 65px; height: 20px; border: 1px solid #003c74; border-radius: 3px; background: linear-gradient(#fff, #ecebe5); outline: 1px dotted #000; outline-offset: -4px; line-height: 18px; }
</style>
